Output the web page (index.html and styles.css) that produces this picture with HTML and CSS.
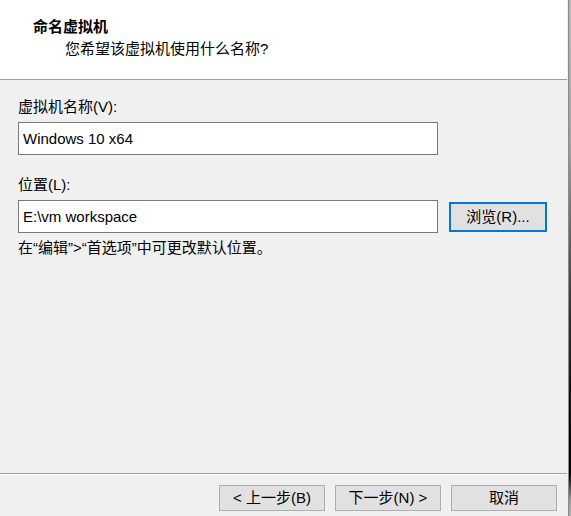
FILE: index.html
```html
<!DOCTYPE html>
<html lang="zh-CN">
<head>
<meta charset="utf-8">
<title>新建虚拟机向导</title>
<link rel="stylesheet" href="styles.css">
</head>
<body>
<div class="window">
  <div class="dialog">
    <div class="header">
      <div class="title">命名虚拟机</div>
      <div class="subtitle">您希望该虚拟机使用什么名称?</div>
    </div>
    <div class="content">
      <div class="label">虚拟机名称(V):</div>
      <input class="textbox" type="text" value="Windows 10 x64">
      <div class="label label-gap">位置(L):</div>
      <div class="row">
        <input class="textbox textbox-path" type="text" value="E:\vm workspace">
        <button class="btn btn-focus">浏览(R)...</button>
      </div>
      <div class="hint">在“编辑”&gt;“首选项”中可更改默认位置。</div>
    </div>
    <div class="footer">
      <button class="btn btn-nav">&lt; 上一步(B)</button>
      <button class="btn btn-nav">下一步(N) &gt;</button>
      <button class="btn btn-nav">取消</button>
    </div>
  </div>
  <div class="edge"></div>
</div>
</body>
</html>
```
FILE: styles.css
```css
html, body {
  margin: 0;
  padding: 0;
  background: #f0f0f0;
}

body {
  font-family: "Liberation Sans", "Noto Sans CJK SC", sans-serif;
  font-size: 15px;
  color: #000;
}

.window {
  display: flex;
  width: 571px;
  height: 516px;
  overflow: hidden;
}

.dialog {
  width: 568px;
  display: flex;
  flex-direction: column;
  background: #f0f0f0;
}

.edge {
  width: 3px;
  border-left: 1px solid #8a8a8a;
  box-sizing: border-box;
  background: linear-gradient(to bottom, #b8b8b8 0px, #a0a0a0 150px, #3a3a3a 300px, #000 440px, #000 474px, #9a9a9a 500px, #b0b0b0 516px);
}

.header {
  height: 80px;
  box-sizing: border-box;
  background: #fff;
  border-bottom: 1px solid #a0a0a0;
  padding: 17px 0 0 33px;
  margin-right: 1px;
}

.title {
  font-weight: bold;
  line-height: 20px;
}

.subtitle {
  margin: 2px 0 0 32px;
  line-height: 20px;
}

.content {
  flex: 1;
  padding: 17px 0 0 18px;
  border-bottom: 1px solid #a0a0a0;
  margin-right: 1px;
}

.label {
  line-height: 20px;
}

.label-gap {
  margin-top: 20px;
}

.textbox {
  display: block;
  box-sizing: border-box;
  width: 420px;
  height: 33px;
  margin: 5px 0 0 0;
  padding: 0 4px;
  border: 1px solid #7a7a7a;
  background: #fff;
  font: inherit;
  color: #000;
  outline: none;
}

.row {
  display: flex;
  align-items: center;
  gap: 11px;
  margin-top: 5px;
}

.row .textbox {
  margin: 0;
}

.hint {
  margin-top: 5px;
  line-height: 20px;
}

.btn {
  box-sizing: border-box;
  font: inherit;
  color: #000;
  background: #e1e1e1;
  border: 1px solid #adadad;
  padding: 0;
  line-height: 20px;
}

.btn-focus {
  width: 98px;
  height: 30px;
  border: 2px solid #0078d7;
}

.footer {
  border-top: 1px solid #fff;
  display: flex;
  justify-content: flex-end;
  gap: 10px;
  padding: 10px 11px 0 0;
  height: 42px;
  box-sizing: border-box;
}

.btn-nav {
  width: 106px;
  height: 26px;
}
```
